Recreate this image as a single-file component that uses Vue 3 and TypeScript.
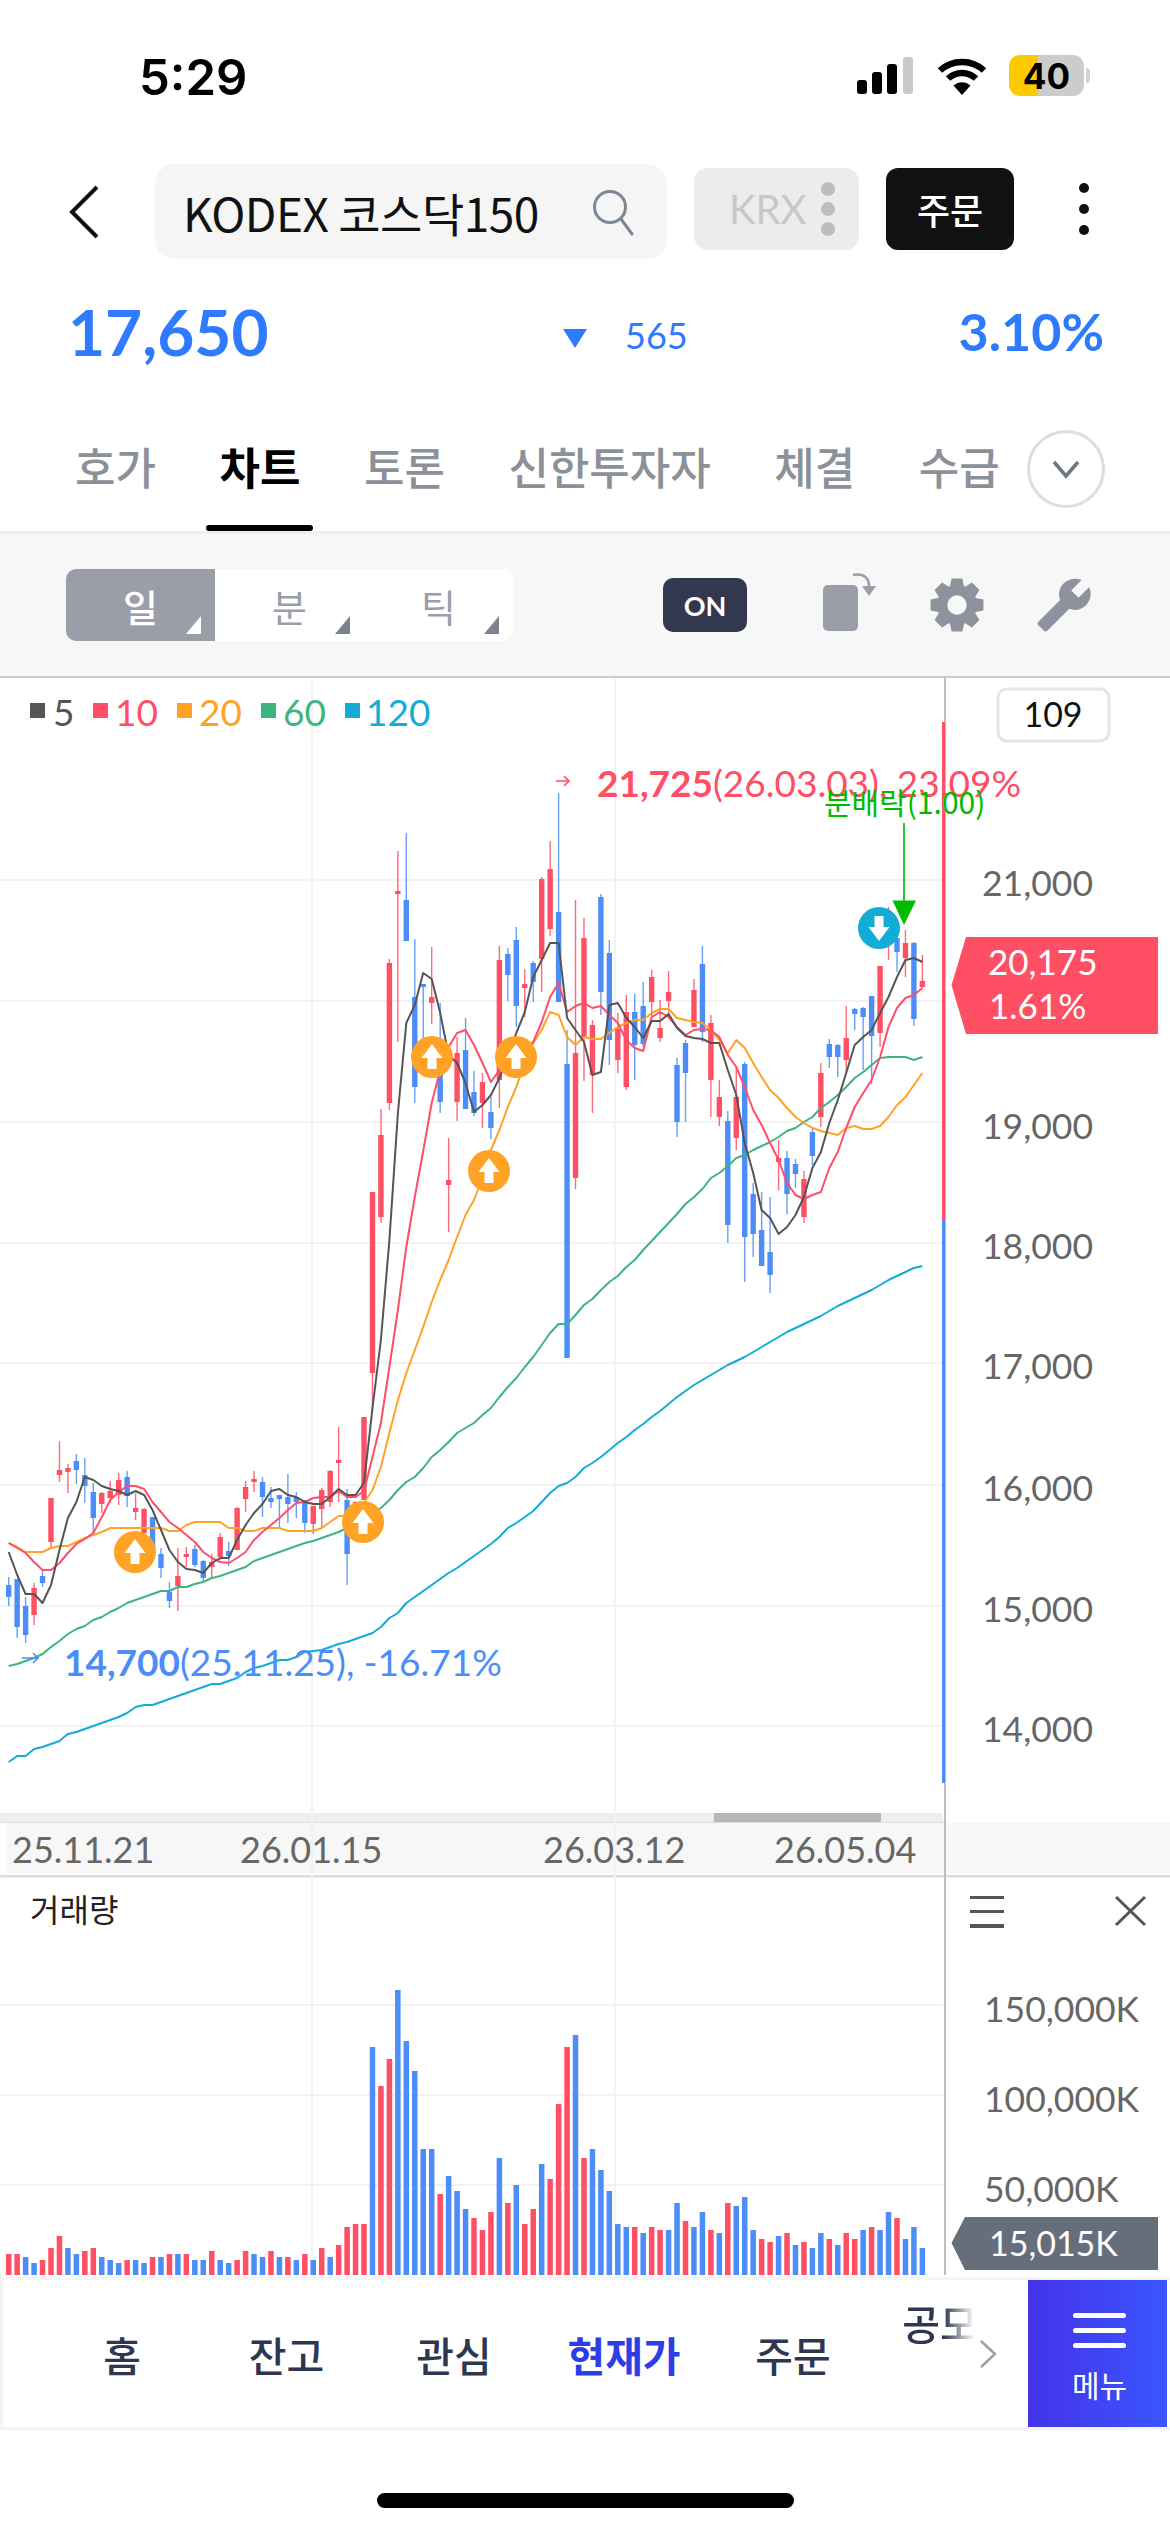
<script setup lang="ts">
type Candle = [string, number, number, number, number];

const RED = "#ff4f64";
const BLUE = "#4d8df7";

// color, high, body top, body bottom, low (screen y)
const candles: Candle[] = [
  ["B", 1577, 1585, 1597, 1606], ["B", 1579, 1579, 1627, 1638], ["B", 1597, 1606, 1635, 1643], ["R", 1583, 1588, 1615, 1625],
  ["B", 1571, 1576, 1583, 1587], ["R", 1498, 1498, 1542, 1547], ["R", 1441, 1470, 1475, 1482], ["R", 1464, 1468, 1472, 1493],
  ["B", 1454, 1461, 1470, 1484], ["B", 1458, 1475, 1486, 1503], ["B", 1483, 1492, 1518, 1533], ["R", 1492, 1493, 1504, 1513],
  ["R", 1481, 1491, 1498, 1503], ["R", 1473, 1480, 1495, 1505], ["B", 1471, 1477, 1496, 1507], ["R", 1493, 1508, 1512, 1520],
  ["R", 1508, 1509, 1533, 1535], ["B", 1517, 1517, 1553, 1563], ["B", 1548, 1554, 1568, 1578], ["B", 1582, 1592, 1601, 1608],
  ["R", 1548, 1576, 1586, 1611], ["R", 1547, 1554, 1557, 1567], ["B", 1545, 1549, 1565, 1567], ["B", 1560, 1561, 1578, 1582],
  ["R", 1554, 1562, 1567, 1579], ["R", 1533, 1537, 1557, 1560], ["B", 1542, 1551, 1556, 1566], ["R", 1507, 1508, 1550, 1550],
  ["R", 1481, 1487, 1499, 1512], ["R", 1471, 1479, 1482, 1492], ["B", 1477, 1482, 1497, 1517], ["B", 1487, 1498, 1502, 1508],
  ["B", 1495, 1495, 1499, 1527], ["B", 1474, 1497, 1504, 1523], ["B", 1492, 1497, 1502, 1518], ["B", 1500, 1500, 1523, 1533],
  ["R", 1506, 1506, 1524, 1534], ["R", 1488, 1490, 1509, 1527], ["R", 1470, 1471, 1502, 1507], ["R", 1427, 1460, 1463, 1502],
  ["B", 1489, 1500, 1554, 1585], ["R", 1501, 1502, 1512, 1515], ["R", 1417, 1417, 1500, 1500], ["R", 1192, 1192, 1373, 1412],
  ["R", 1109, 1135, 1217, 1223], ["R", 959, 963, 1103, 1110], ["R", 851, 891, 894, 1042], ["B", 833, 900, 941, 941],
  ["B", 939, 997, 1087, 1103], ["B", 984, 984, 987, 1047], ["R", 947, 997, 1003, 1024], ["B", 1003, 1075, 1102, 1113],
  ["R", 1138, 1180, 1185, 1232], ["R", 1037, 1053, 1102, 1121], ["B", 1018, 1050, 1109, 1109], ["B", 1071, 1092, 1113, 1116],
  ["R", 1073, 1082, 1103, 1128], ["B", 1097, 1112, 1128, 1139], ["R", 946, 960, 1080, 1108], ["B", 948, 954, 975, 1001],
  ["B", 927, 940, 1006, 1027], ["R", 969, 984, 988, 1017], ["B", 961, 963, 982, 1002], ["R", 877, 879, 959, 992],
  ["R", 841, 869, 929, 936], ["B", 793, 912, 1002, 1002], ["B", 1030, 1064, 1358, 1358], ["R", 900, 1053, 1178, 1189],
  ["R", 918, 938, 1038, 1081], ["R", 1020, 1025, 1075, 1113], ["B", 894, 897, 992, 1015], ["B", 940, 953, 1040, 1065],
  ["R", 1013, 1029, 1060, 1073], ["R", 995, 1012, 1087, 1090], ["B", 994, 1012, 1045, 1080], ["B", 982, 1006, 1044, 1047],
  ["R", 970, 977, 1002, 1017], ["R", 1000, 1028, 1038, 1042], ["R", 971, 992, 1001, 1013], ["B", 1058, 1065, 1122, 1137],
  ["B", 1040, 1043, 1073, 1122], ["R", 979, 990, 1027, 1027], ["B", 946, 964, 1032, 1042], ["R", 1015, 1023, 1080, 1117],
  ["R", 1080, 1097, 1117, 1126], ["B", 1111, 1121, 1225, 1243], ["R", 1068, 1097, 1138, 1150], ["B", 1062, 1064, 1237, 1282],
  ["B", 1183, 1194, 1234, 1257], ["B", 1192, 1230, 1266, 1266], ["B", 1197, 1252, 1275, 1293], ["R", 1140, 1158, 1162, 1190],
  ["B", 1151, 1158, 1194, 1214], ["B", 1159, 1164, 1174, 1188], ["R", 1171, 1179, 1217, 1223], ["B", 1129, 1132, 1156, 1165],
  ["R", 1063, 1073, 1117, 1127], ["B", 1039, 1044, 1057, 1068], ["B", 1044, 1045, 1057, 1077], ["R", 1006, 1038, 1060, 1073],
  ["B", 1008, 1009, 1014, 1030], ["B", 1007, 1008, 1017, 1070], ["B", 996, 996, 1036, 1084], ["R", 966, 966, 1033, 1047],
  ["R", 907, 930, 945, 960], ["B", 933, 938, 952, 972], ["R", 930, 943, 958, 977], ["B", 942, 943, 1019, 1026],
  ["R", 955, 981, 987, 988],
];

const ma5 = [
  1552, 1575, 1594, 1594, 1603, 1585, 1550, 1518, 1502, 1477, 1480, 1486, 1489, 1491, 1495, 1491, 1495, 1510, 1530, 1550,
  1562, 1569, 1570, 1573, 1563, 1558, 1558, 1540, 1525, 1513, 1504, 1491, 1489, 1495, 1497, 1502, 1504, 1504, 1497, 1489,
  1495, 1495, 1483, 1408, 1340, 1240, 1113, 1023, 1005, 973, 979, 1013, 1055, 1063, 1083, 1112, 1105, 1095, 1078, 1057,
  1033, 1012, 977, 960, 943, 943, 1018, 1030, 1042, 1075, 1072, 1005, 1003, 1018, 1027, 1038, 1021, 1021, 1014, 1028,
  1036, 1038, 1039, 1043, 1043, 1070, 1095, 1143, 1173, 1210, 1218, 1234, 1227, 1215, 1197, 1168, 1152, 1123, 1100, 1073,
  1045, 1037, 1030, 1013, 997, 977, 960, 958, 962,
];
const ma10 = [
  1543, 1548, 1553, 1562, 1570, 1570, 1563, 1553, 1544, 1539, 1533, 1517, 1500, 1492, 1486, 1486, 1489, 1502, 1512, 1522,
  1528, 1535, 1542, 1552, 1558, 1562, 1563, 1558, 1552, 1540, 1532, 1525, 1518, 1510, 1503, 1502, 1498, 1497, 1497, 1491,
  1497, 1497, 1491, 1457, 1423, 1367, 1310, 1247, 1197, 1151, 1103, 1070, 1047, 1033, 1030, 1045, 1063, 1082, 1070, 1060,
  1057, 1050, 1042, 1022, 997, 983, 1012, 1006, 1003, 1008, 1006, 1015, 1023, 1040, 1048, 1051, 1017, 1012, 1017, 1027,
  1035, 1030, 1029, 1030, 1037, 1055, 1067, 1087, 1110, 1125, 1143, 1160, 1183, 1195, 1199, 1195, 1192, 1168, 1152, 1128,
  1107, 1093, 1080, 1057, 1027, 1008, 998, 995, 988,
];
const ma20 = [
  1543, 1547, 1552, 1552, 1552, 1548, 1546, 1546, 1542, 1538, 1535, 1532, 1528, 1528, 1528, 1528, 1528, 1528, 1528, 1531,
  1531, 1525, 1522, 1522, 1522, 1522, 1528, 1528, 1531, 1531, 1528, 1528, 1528, 1531, 1531, 1531, 1531, 1528, 1522, 1516,
  1516, 1512, 1503, 1490, 1467, 1433, 1400, 1373, 1350, 1327, 1302, 1280, 1260, 1237, 1215, 1200, 1178, 1150, 1130, 1107,
  1087, 1062, 1043, 1030, 1012, 1015, 1037, 1045, 1037, 1039, 1039, 1033, 1027, 1023, 1020, 1020, 1013, 1009, 1009, 1018,
  1020, 1022, 1023, 1030, 1040, 1053, 1040, 1048, 1063, 1077, 1090, 1098, 1108, 1117, 1123, 1128, 1131, 1133, 1135, 1128,
  1126, 1129, 1129, 1126, 1117, 1105, 1097, 1085, 1073,
];
const ma60 = [
  1666, 1664, 1661, 1658, 1654, 1647, 1641, 1634, 1629, 1626, 1620, 1617, 1612, 1608, 1603, 1600, 1597, 1594, 1591, 1591,
  1587, 1587, 1584, 1582, 1578, 1576, 1573, 1570, 1567, 1561, 1558, 1555, 1552, 1549, 1546, 1543, 1541, 1538, 1535, 1532,
  1528, 1523, 1518, 1513, 1508, 1500, 1490, 1482, 1477, 1468, 1457, 1450, 1442, 1433, 1428, 1423, 1415, 1408, 1397, 1387,
  1378, 1367, 1357, 1345, 1333, 1324, 1324, 1315, 1305, 1299, 1290, 1282, 1276, 1267, 1260, 1250, 1241, 1232, 1223, 1214,
  1204, 1197, 1189, 1178, 1173, 1166, 1158, 1155, 1150, 1146, 1142, 1137, 1131, 1128, 1122, 1117, 1108, 1102, 1095, 1087,
  1078, 1072, 1065, 1058, 1057, 1057, 1057, 1060, 1057,
];
const ma120 = [
  1762, 1756, 1756, 1749, 1747, 1744, 1741, 1734, 1732, 1729, 1726, 1723, 1720, 1717, 1713, 1707, 1705, 1705, 1702, 1699,
  1696, 1693, 1690, 1687, 1684, 1684, 1681, 1678, 1672, 1668, 1666, 1663, 1660, 1660, 1657, 1652, 1651, 1650, 1647, 1644,
  1642, 1639, 1636, 1633, 1627, 1618, 1613, 1603, 1597, 1591, 1585, 1579, 1573, 1568, 1562, 1556, 1550, 1544, 1537, 1528,
  1523, 1517, 1511, 1502, 1493, 1486, 1483, 1477, 1468, 1463, 1457, 1450, 1443, 1437, 1430, 1424, 1417, 1411, 1404, 1397,
  1391, 1385, 1380, 1375, 1370, 1365, 1361, 1357, 1352, 1347, 1342, 1337, 1332, 1328, 1324, 1320, 1316, 1311, 1306, 1302,
  1298, 1294, 1290, 1285, 1280, 1276, 1272, 1268, 1266,
];

const volumeColors =
  "RRBBRRRBBRRBBBRBBRBRBRBBRBBRRBBRBRBRBRBRRRRBRRBBBBBRBBBRRRBRBRRBRRRBRBBBBBRBRRBBRBBRBRBBBRRBRBRBBRBRRBRBBRB";
const volumeHeights = [
  21, 21, 18, 12, 15, 27, 39, 27, 21, 24, 27, 18, 15, 12, 15, 15, 12, 18, 18, 21, 21, 21, 15, 15, 24, 15, 12, 15, 24, 21,
  18, 24, 18, 18, 15, 21, 15, 27, 18, 30, 48, 51, 51, 228, 189, 216, 285, 234, 204, 126, 126, 81, 99, 84, 66, 57, 45, 63,
  117, 72, 90, 51, 66, 111, 96, 171, 228, 240, 117, 126, 105, 84, 51, 48, 48, 42, 48, 45, 45, 72, 54, 48, 63, 45, 42, 72,
  69, 78, 45, 36, 33, 39, 42, 30, 33, 27, 42, 36, 30, 42, 36, 45, 48, 45, 63, 57, 36, 48, 27,
];

const xAt = (i: number) => 8.7 + 8.46 * i;
const linePoints = (ys: number[]) => ys.map((y, i) => `${xAt(i).toFixed(1)},${y}`).join(" ");

const maLines = [
  { color: "#3cb57e", points: linePoints(ma60) },
  { color: "#12acd6", points: linePoints(ma120) },
  { color: "#ffa226", points: linePoints(ma20) },
  { color: "#ff4d6a", points: linePoints(ma10) },
  { color: "#555555", points: linePoints(ma5) },
];

const legend = [
  { label: "5", color: "#555555", sq: 30, tx: 53 },
  { label: "10", color: "#ff4d6a", sq: 93, tx: 115 },
  { label: "20", color: "#ffa226", sq: 177, tx: 199 },
  { label: "60", color: "#3cb57e", sq: 261, tx: 283 },
  { label: "120", color: "#12acd6", sq: 345, tx: 366 },
];

const gridY = [880, 1001, 1122, 1243, 1363, 1485, 1606, 1726, 2005, 2095, 2185];
const priceLabels = [
  { y: 883, t: "21,000" },
  { y: 1126, t: "19,000" },
  { y: 1246, t: "18,000" },
  { y: 1366, t: "17,000" },
  { y: 1488, t: "16,000" },
  { y: 1609, t: "15,000" },
  { y: 1729, t: "14,000" },
];
const dateLabels = [
  { x: 12, t: "25.11.21" },
  { x: 240, t: "26.01.15" },
  { x: 543, t: "26.03.12" },
  { x: 774, t: "26.05.04" },
];
const volumeLabels = [
  { y: 2009, t: "150,000K" },
  { y: 2099, t: "100,000K" },
  { y: 2189, t: "50,000K" },
];
const buyMarks = [
  { x: 135, y: 1552 },
  { x: 363, y: 1522 },
  { x: 432, y: 1057 },
  { x: 489, y: 1171 },
  { x: 516, y: 1057 },
];

const tabs = ["호가", "차트", "토론", "신한투자자", "체결", "수급"];
const navItems = ["홈", "잔고", "관심", "현재가", "주문", "공모"];

// 8 teeth, hole cut by evenodd
const gearPath = (() => {
  const cx = 25;
  const cy = 25;
  const out = 25;
  const inner = 18.5;
  let d = "";
  for (let i = 0; i < 8; i++) {
    const a = (i * Math.PI) / 4;
    const pts = [
      [inner, a - 0.36],
      [out, a - 0.2],
      [out, a + 0.2],
      [inner, a + 0.36],
    ];
    for (const [r, t] of pts) {
      d += `${d ? "L" : "M"}${(cx + r * Math.sin(t)).toFixed(1)} ${(cy - r * Math.cos(t)).toFixed(1)}`;
    }
  }
  return `${d}Z M34 25a9 9 0 1 0 -18 0a9 9 0 1 0 18 0Z`;
})();
</script>

<template>
  <div class="page">
    <div class="status-bar">
      <span class="time">5:29</span>
      <div class="status-icons">
        <svg class="signal" width="56" height="37" viewBox="0 0 56 37">
          <rect x="0" y="23" width="10" height="14" rx="3" fill="#000" />
          <rect x="15" y="15" width="10" height="22" rx="3" fill="#000" />
          <rect x="30" y="7" width="10" height="30" rx="3" fill="#000" />
          <rect x="46" y="0" width="10" height="37" rx="3" fill="#c9c9c9" />
        </svg>
        <svg class="wifi" width="50" height="38" viewBox="0 0 50 38">
          <path d="M3 13.5C15 2 35 2 47 13.5" fill="none" stroke="#000" stroke-width="6.5" />
          <path d="M11 21.5C19 14 31 14 39 21.5" fill="none" stroke="#000" stroke-width="6.5" />
          <path d="M25 38L16.5 28.5C21.5 24 28.5 24 33.5 28.5Z" fill="#000" />
        </svg>
        <div class="battery"><span>40</span></div>
        <div class="battery-nub"></div>
      </div>
    </div>

    <div class="top-row">
      <svg class="back" width="30" height="54" viewBox="0 0 30 54">
        <path d="M28 2L3 27L28 52" fill="none" stroke="#111" stroke-width="4" />
      </svg>
      <div class="search">
        <span class="search-text">KODEX 코스닥150</span>
        <svg width="44" height="50" viewBox="0 0 44 50">
          <circle cx="19" cy="20" r="15.5" fill="none" stroke="#7d8694" stroke-width="3" />
          <path d="M30 32L41 47" fill="none" stroke="#7d8694" stroke-width="3" stroke-linecap="round" />
        </svg>
      </div>
      <div class="krx">
        <span>KRX</span>
        <div class="krx-dots"><i></i><i></i><i></i></div>
      </div>
      <div class="order">주문</div>
      <div class="kebab"><i></i><i></i><i></i></div>
    </div>

    <div class="price-row">
      <span class="price">17,650</span>
      <div class="change">
        <svg width="24" height="19" viewBox="0 0 24 19"><path d="M0 0H24L12 19Z" fill="#2f7bff" /></svg>
        <span>565</span>
      </div>
      <span class="rate">3.10%</span>
    </div>

    <div class="tabs">
      <div v-for="tab in tabs" :key="tab" class="tab" :class="{ active: tab === '차트' }">{{ tab }}</div>
      <div class="tab-more">
        <svg width="30" height="20" viewBox="0 0 30 20">
          <path d="M3 3L15 17L27 3" fill="none" stroke="#6f7680" stroke-width="3.5" />
        </svg>
      </div>
    </div>

    <div class="toolbar">
      <div class="segment">
        <div class="seg on">일<b></b></div>
        <div class="seg">분<b></b></div>
        <div class="seg">틱<b></b></div>
      </div>
      <div class="on-badge">ON</div>
      <svg class="tool-rotate" width="54" height="60" viewBox="0 0 54 60">
        <rect x="1" y="13" width="35" height="46" rx="5" fill="#9a9ea8" />
        <path d="M31 3C42 1 48 6 47 17" fill="none" stroke="#9a9ea8" stroke-width="2.5" />
        <path d="M40 14H54L47 24Z" fill="#9a9ea8" />
      </svg>
      <svg class="tool-gear" width="54" height="54" viewBox="0 0 50 50">
        <path :d="gearPath" fill="#8d929c" fill-rule="evenodd" />
      </svg>
      <svg class="tool-wrench" width="58" height="58" viewBox="0 0 24 24">
        <path
          transform="matrix(-1 0 0 1 24 0)"
          d="M22.7 19l-9.1-9.1c.9-2.3.4-5-1.5-6.9-2-2-5-2.4-7.4-1.3L9 6 6 9 1.6 4.7C.4 7.1.9 10.1 2.9 12.1c1.9 1.9 4.6 2.4 6.9 1.5l9.1 9.1c.4.4 1 .4 1.4 0l2.3-2.3c.5-.4.5-1.1.1-1.4z"
          fill="#8d929c"
        />
      </svg>
    </div>

    <svg class="chart" width="1170" height="1599" viewBox="0 678 1170 1599">
      <!-- bands -->
      <rect x="0" y="1813" width="943" height="9" fill="#eeeeee" />
      <rect x="714" y="1813" width="167" height="9" fill="#b8b8b8" />
      <rect x="6" y="1823" width="1164" height="50" fill="#f7f7f7" />
      <rect x="0" y="1822" width="944" height="1" fill="#dddddd" />
      <rect x="0" y="1875" width="1170" height="2.5" fill="#dddddd" />

      <!-- grid -->
      <rect v-for="y in gridY" :key="y" x="0" :y="y - 1" width="943" height="2" fill="#f2f2f2" />
      <rect x="311" y="678" width="2" height="1582" fill="#f2f2f2" />
      <rect x="614" y="678" width="2" height="1582" fill="#f2f2f2" />

      <!-- candles -->
      <g v-for="(c, i) in candles" :key="i" :fill="c[0] === 'R' ? RED : BLUE">
        <rect :x="xAt(i) - 0.7" :y="c[1]" width="1.4" :height="c[4] - c[1]" opacity="0.85" />
        <rect :x="xAt(i) - 2.7" :y="c[2]" width="5.4" :height="Math.max(c[3] - c[2], 3)" />
      </g>

      <!-- moving averages -->
      <polyline v-for="line in maLines" :key="line.color" :points="line.points" :stroke="line.color" class="ma" />

      <!-- volume -->
      <rect
        v-for="(h, i) in volumeHeights"
        :key="'v' + i"
        :x="xAt(i) - 2.75"
        :y="2275 - h"
        width="5.5"
        :height="h"
        :fill="volumeColors[i] === 'R' ? RED : BLUE"
      />

      <!-- buy / sell marks -->
      <g v-for="m in buyMarks" :key="m.x" :transform="`translate(${m.x} ${m.y})`">
        <circle r="21" fill="#ffa226" />
        <path d="M0 -13L10.5 1H4.5V12H-4.5V1H-10.5Z" fill="#fff" />
      </g>
      <g transform="translate(879 928)">
        <circle r="21" fill="#13acd6" />
        <path d="M0 13L10.5 -1H4.5V-12H-4.5V-1H-10.5Z" fill="#fff" />
      </g>

      <!-- axis -->
      <rect x="944" y="678" width="2" height="1597" fill="#bdbdbd" />
      <rect x="942" y="722" width="3" height="497" fill="#ff4f64" />
      <rect x="942" y="1219" width="3" height="564" fill="#4d8df7" />
      <text v-for="p in priceLabels" :key="p.t" x="1093" :y="p.y + 13" text-anchor="end" class="axis-text">{{ p.t }}</text>
      <text v-for="d in dateLabels" :key="d.t" :x="d.x" y="1863" class="date-text">{{ d.t }}</text>
      <text v-for="v in volumeLabels" :key="v.t" x="984" :y="v.y + 13" class="axis-text">{{ v.t }}</text>

      <!-- legend -->
      <g v-for="l in legend" :key="l.label">
        <rect :x="l.sq" y="703" width="15" height="15" :fill="l.color" />
        <text :x="l.tx" y="726" class="legend-text" :fill="l.color">{{ l.label }}</text>
      </g>

      <rect x="998" y="689" width="111" height="52" rx="9" fill="#fff" stroke="#e5e5e5" stroke-width="3" />
      <text x="1053" y="727" text-anchor="middle" class="count-text">109</text>

      <!-- high / low notes -->
      <path d="M556 781H569M564 776L569 781L564 786" fill="none" :stroke="RED" stroke-width="1.6" />
      <text x="597" y="797" class="note-text" :fill="RED"><tspan font-weight="700">21,725</tspan>(26.03.03), 23.09%</text>
      <text x="824" y="814" class="split-text">분배락(1.00)</text>
      <rect x="903.2" y="823" width="1.6" height="78" fill="#00bb00" />
      <path d="M892.5 900.5H916L904 925Z" fill="#00bb00" />

      <path d="M22 1658H38M33 1653L38 1658L33 1663" fill="none" :stroke="BLUE" stroke-width="1.6" />
      <text x="64" y="1676" class="note-text" :fill="BLUE"><tspan font-weight="700">14,700</tspan>(25.11.25), -16.71%</text>

      <!-- current price tags -->
      <path d="M951.5 985L966 937H1158V1034H966Z" fill="#ff4f64" />
      <text x="988" y="975" class="tag-text">20,175</text>
      <text x="989" y="1019" class="tag-text">1.61%</text>

      <text x="30" y="1922" class="vol-title">거래량</text>
      <g fill="#555555">
        <rect x="970" y="1896" width="34" height="3" />
        <rect x="970" y="1910" width="34" height="3" />
        <rect x="970" y="1924" width="34" height="4" />
      </g>
      <path d="M1116 1897L1145 1925M1145 1897L1116 1925" fill="none" stroke="#555555" stroke-width="3" />

      <path d="M951.5 2243L965 2217H1158V2270H965Z" fill="#656e7a" />
      <text x="989" y="2256" class="tag-text small">15,015K</text>
    </svg>

    <div class="bottom-nav">
      <div class="nav-list">
        <div
          v-for="item in navItems"
          :key="item"
          class="nav-item"
          :class="{ current: item === '현재가', cut: item === '공모' }"
        >
          <span>{{ item }}</span>
        </div>
        <svg class="nav-arrow" width="18" height="28" viewBox="0 0 18 28">
          <path d="M2 1L16 14L2 27" fill="none" stroke="#a0a0a0" stroke-width="2.5" />
        </svg>
      </div>
      <div class="menu-btn">
        <i></i><i></i><i></i>
        <span>메뉴</span>
      </div>
    </div>

    <div class="home-bar"></div>
  </div>
</template>

<style scoped>
.page {
  width: 1170px;
  height: 2532px;
  background: #fff;
  overflow: hidden;
  font-family: "Noto Sans CJK KR", "Noto Sans", sans-serif;
}

.status-bar {
  height: 164px;
  display: flex;
  justify-content: space-between;
  box-sizing: border-box;
  padding: 48px 80px 0 139px;
}

.time {
  font-family: Inter, sans-serif;
  font-weight: 600;
  font-size: 49px;
  line-height: 60px;
  color: #000;
}

.status-icons {
  display: flex;
  align-items: flex-start;
  padding-top: 9px;
}

.wifi {
  margin-left: 24px;
}

.battery {
  margin-left: 22px;
  margin-top: -2px;
  width: 75px;
  height: 41px;
  border-radius: 11px;
  background: linear-gradient(90deg, #fdca00 39%, #cccccc 39%);
  display: flex;
  align-items: center;
  justify-content: center;
  font-family: Inter, sans-serif;
  font-weight: 700;
  font-size: 35px;
  color: #000;
}

.battery-nub {
  width: 4px;
  height: 15px;
  margin-top: 11px;
  margin-left: 2px;
  background: #d2d2d2;
  border-radius: 0 4px 4px 0;
}

.top-row {
  height: 95px;
  display: flex;
  align-items: center;
  position: relative;
}

.back {
  margin-left: 69px;
}

.search {
  margin-left: 56px;
  width: 512px;
  height: 95px;
  border-radius: 20px;
  background: #f5f5f5;
  display: flex;
  align-items: center;
  justify-content: space-between;
  box-sizing: border-box;
  padding: 0 32px 0 28px;
}

.search-text {
  font-size: 46px;
  letter-spacing: -0.5px;
  color: #111;
}

.krx {
  margin-left: 27px;
  width: 165px;
  height: 82px;
  margin-top: -5px;
  border-radius: 14px;
  background: #ececec;
  display: flex;
  align-items: center;
  justify-content: space-between;
  box-sizing: border-box;
  padding: 0 24px 0 35px;
  font-family: Lato, sans-serif;
  font-size: 40px;
  color: #c8c8c8;
}

.krx-dots {
  display: flex;
  flex-direction: column;
  gap: 6px;
}

.krx-dots i {
  width: 14px;
  height: 14px;
  border-radius: 50%;
  background: #bdbdbd;
}

.order {
  margin-left: 27px;
  width: 128px;
  height: 82px;
  margin-top: -5px;
  border-radius: 12px;
  background: #111;
  color: #fff;
  font-size: 36px;
  font-weight: 500;
  display: flex;
  align-items: center;
  justify-content: center;
}

.kebab {
  margin-left: 65px;
  margin-top: -5px;
  display: flex;
  flex-direction: column;
  gap: 11px;
}

.kebab i {
  width: 10px;
  height: 10px;
  border-radius: 50%;
  background: #111;
}

.price-row {
  height: 141px;
  display: flex;
  align-items: center;
  box-sizing: border-box;
  padding: 0 66px 0 68px;
  color: #2f7bff;
}

.price {
  width: 495px;
  font-family: Lato, sans-serif;
  font-weight: 700;
  font-size: 64px;
  margin-top: 3px;
}

.change {
  flex: 1;
  display: flex;
  align-items: center;
  gap: 38px;
  font-family: Lato, sans-serif;
  font-size: 36px;
  margin-top: 10px;
}

.change svg {
  margin-top: 8px;
}

.rate {
  font-family: Lato, sans-serif;
  font-weight: 700;
  font-size: 52px;
  margin-top: 3px;
}

.tabs {
  height: 134px;
  box-sizing: border-box;
  border-bottom: 3px solid #eeeeee;
  display: flex;
  padding-left: 62px;
  gap: 37.5px;
}

.tab {
  position: relative;
  height: 131px;
  padding: 0 13px;
  display: flex;
  align-items: center;
  font-size: 44px;
  font-weight: 500;
  color: #8c9199;
}

.tab.active {
  color: #000;
  font-weight: 700;
}

.tab.active::after {
  content: "";
  position: absolute;
  left: 0;
  right: 0;
  bottom: 0;
  height: 6px;
  border-radius: 3px;
  background: #000;
}

.tab-more {
  width: 78px;
  height: 78px;
  margin-top: 30px;
  margin-left: -23px;
  border: 3px solid #dddddd;
  border-radius: 50%;
  box-sizing: border-box;
  display: flex;
  align-items: center;
  justify-content: center;
}

.toolbar {
  height: 144px;
  box-sizing: border-box;
  border-bottom: 2px solid #cccccc;
  background: #f7f7f7;
  display: flex;
  align-items: center;
  padding-left: 66px;
}

.segment {
  width: 447px;
  height: 72px;
  display: flex;
  background: #fff;
  border-radius: 10px;
  overflow: hidden;
}

.seg {
  position: relative;
  width: 149px;
  display: flex;
  align-items: center;
  justify-content: center;
  font-size: 38px;
  color: #9a9ea8;
}

.seg b {
  position: absolute;
  right: 14px;
  bottom: 7px;
  width: 15px;
  height: 18px;
  background: #7d8290;
  clip-path: polygon(100% 0, 100% 100%, 0 100%);
}

.seg.on {
  background: #9a9ea8;
  color: #fff;
  font-weight: 500;
}

.seg.on b {
  background: #fff;
}

.on-badge {
  margin-left: 150px;
  width: 84px;
  height: 54px;
  border-radius: 10px;
  background: #323850;
  color: #fff;
  font-family: Lato, sans-serif;
  font-weight: 700;
  font-size: 27px;
  display: flex;
  align-items: center;
  justify-content: center;
}

.tool-rotate {
  margin-left: 75px;
  margin-top: -6px;
}

.tool-gear {
  margin-left: 54px;
}

.tool-wrench {
  margin-left: 51px;
}

.chart {
  display: block;
}

.ma {
  fill: none;
  stroke-width: 2;
  stroke-linejoin: round;
}

.axis-text {
  font-family: Lato, sans-serif;
  font-size: 35.5px;
  fill: #666666;
}

.date-text {
  font-family: Lato, sans-serif;
  font-size: 36px;
  fill: #666666;
}

.legend-text {
  font-family: Lato, sans-serif;
  font-size: 37px;
}

.count-text {
  font-family: Lato, sans-serif;
  font-size: 34px;
  fill: #111;
}

.note-text {
  font-family: Lato, sans-serif;
  font-size: 37px;
}

.split-text {
  font-family: "Noto Sans CJK KR", sans-serif;
  font-size: 30px;
  fill: #00bb00;
}

.tag-text {
  font-family: Lato, sans-serif;
  font-size: 35px;
  fill: #fff;
}

.tag-text.small {
  font-size: 34px;
}

.vol-title {
  font-size: 32px;
  fill: #222;
}

.bottom-nav {
  height: 153px;
  box-sizing: border-box;
  border-top: 3px solid #f4f4f4;
  border-bottom: 3px solid #f4f4f4;
  border-left: 3px solid #f4f4f4;
  display: flex;
}

.nav-list {
  position: relative;
  flex: 1;
  display: grid;
  grid-template-columns: 164px 165px 170px 170px 168px 126px;
  padding-left: 37px;
}

.nav-item {
  display: flex;
  align-items: center;
  justify-content: center;
  font-size: 41px;
  font-weight: 500;
  color: #2f3650;
  white-space: nowrap;
}

.nav-item.current {
  color: #2d3de8;
  font-weight: 700;
}

.nav-item.cut {
  padding-bottom: 64px;
  box-sizing: border-box;
}

.nav-item.cut span {
  -webkit-mask-image: linear-gradient(90deg, #000 55%, transparent 95%);
  mask-image: linear-gradient(90deg, #000 55%, transparent 95%);
}

.nav-arrow {
  position: absolute;
  left: 976px;
  top: 60px;
}

.menu-btn {
  width: 139px;
  margin-right: 3px;
  background: linear-gradient(90deg, #4433e8, #3a55ff);
  display: flex;
  flex-direction: column;
  align-items: center;
  padding-top: 33px;
  padding-left: 4px;
  box-sizing: border-box;
  color: #fff;
}

.menu-btn i {
  width: 53px;
  height: 5px;
  border-radius: 3px;
  background: #fff;
  margin-bottom: 10px;
}

.menu-btn span {
  font-size: 30px;
  line-height: 34px;
  margin-top: 9px;
}

.home-bar {
  width: 417px;
  height: 15px;
  margin: 63px auto 0;
  border-radius: 8px;
  background: #000;
}
</style>
